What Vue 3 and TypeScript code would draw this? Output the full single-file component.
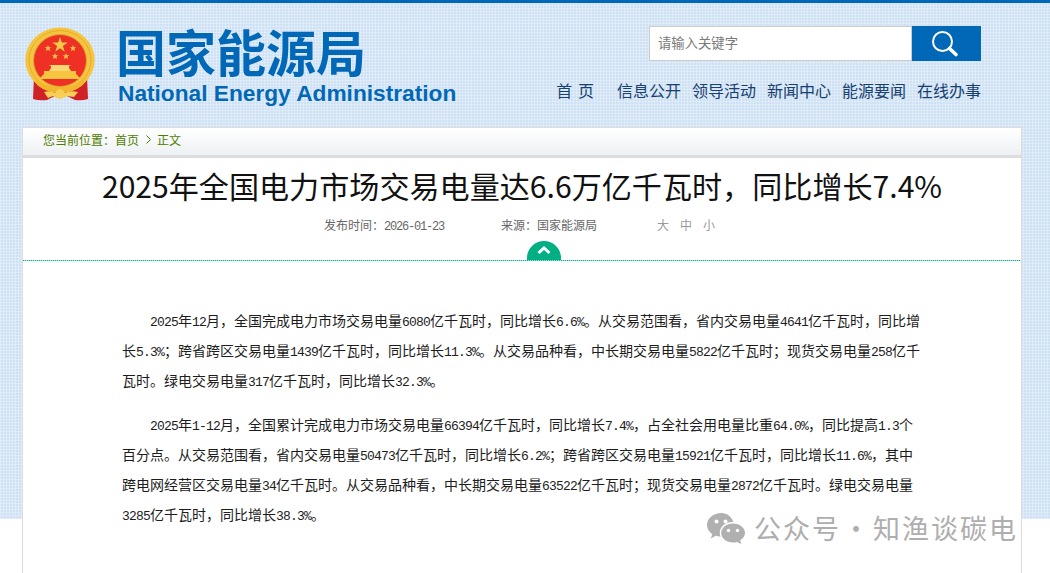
<script setup lang="ts">
type Run = { text: string; latin: boolean }

function toRuns(text: string): Run[] {
  return text
    .split(/([0-9.%\-]+)/)
    .filter((part) => part.length > 0)
    .map((part) => ({ text: part, latin: /^[0-9.%\-]+$/.test(part) }))
}

const navItems = ['信息公开', '领导活动', '新闻中心', '能源要闻', '在线办事']

const paragraphs: Run[][] = [
  '2025年12月，全国完成电力市场交易电量6080亿千瓦时，同比增长6.6%。从交易范围看，省内交易电量4641亿千瓦时，同比增长5.3%；跨省跨区交易电量1439亿千瓦时，同比增长11.3%。从交易品种看，中长期交易电量5822亿千瓦时；现货交易电量258亿千瓦时。绿电交易电量317亿千瓦时，同比增长32.3%。',
  '2025年1-12月，全国累计完成电力市场交易电量66394亿千瓦时，同比增长7.4%，占全社会用电量比重64.0%，同比提高1.3个百分点。从交易范围看，省内交易电量50473亿千瓦时，同比增长6.2%；跨省跨区交易电量15921亿千瓦时，同比增长11.6%，其中跨电网经营区交易电量34亿千瓦时。从交易品种看，中长期交易电量63522亿千瓦时；现货交易电量2872亿千瓦时。绿电交易电量3285亿千瓦时，同比增长38.3%。',
].map(toRuns)
</script>

<template>
  <div class="page">
    <header class="header">
      <div class="brand">
        <svg class="emblem" width="72" height="76" viewBox="0 0 72 76">
          <path d="M9 48 L8 72 Q14 74 22 73 L30 69 L42 69 L50 73 Q57 74 63 72 L62 48 Z" fill="#cf2226" />
          <ellipse cx="35" cy="33" rx="34.700" ry="32.500" fill="#f6c53f" />
          <ellipse cx="35" cy="33" rx="31" ry="29.500" fill="none" stroke="#e5ab2a" stroke-width="1" />
          <ellipse cx="35" cy="33.500" rx="26.500" ry="26" fill="#ee3124" stroke="#d7a735" stroke-width="1" />
          <path d="M35 10 l1.800 5.600 h5.900 l-4.800 3.500 1.800 5.700 -4.700 -3.500 -4.700 3.500 1.800 -5.700 -4.800 -3.500 h5.900 z" fill="#f7c948" />
          <path d="M23 18 l.8 2.300 h2.500 l-2 1.500 .8 2.400 -2.100 -1.500 -2.100 1.500 .8 -2.400 -2 -1.500 h2.500 z" fill="#f7c948" />
          <path d="M48 18 l.8 2.300 h2.500 l-2 1.500 .8 2.400 -2.100 -1.500 -2.100 1.500 .8 -2.400 -2 -1.500 h2.500 z" fill="#f7c948" />
          <path d="M30 26 l.8 2.300 h2.500 l-2 1.500 .8 2.400 -2.100 -1.500 -2.100 1.500 .8 -2.400 -2 -1.500 h2.500 z" fill="#f7c948" />
          <path d="M41 26 l.8 2.300 h2.500 l-2 1.500 .8 2.400 -2.100 -1.500 -2.100 1.500 .8 -2.400 -2 -1.500 h2.500 z" fill="#f7c948" />
          <path d="M24 44 l2 -3 v-2 l-2 -1 h22 l-2 1 v2 l2 3 z" fill="#f9d873" />
          <path d="M14 52 h42 l-5 -5 v-3 h-32 v3 z" fill="#f6c53f" />
          <path d="M10 52 Q20 60 35 60 Q50 60 60 52 L58 58 Q48 66 35 66 Q22 66 12 58 Z" fill="#f2b72f" />
          <path d="M19 65 Q26 63 30 66 Q35 58 40 66 Q44 63 53 65 L49 70 L42 69 Q35 75 28 69 L23 71 Z" fill="#f7cf57" />
        </svg>
        <div class="brand-text">
          <div class="brand-cn">国家能源局</div>
          <div class="brand-en">National Energy Administration</div>
        </div>
      </div>
      <div class="tools">
        <form class="search" @submit.prevent>
          <div class="search-input">请输入关键字</div>
          <button class="search-btn" type="button" aria-label="搜索">
            <svg width="28" height="28" viewBox="0 0 28 28">
              <circle cx="11.500" cy="11.500" r="9.500" fill="none" stroke="#fff" stroke-width="2" />
              <path d="M18.500 18.500 L25 24.500" stroke="#fff" stroke-width="3.600" stroke-linecap="round" />
            </svg>
          </button>
        </form>
        <nav class="nav">
          <a class="nav-home">首 页</a>
          <div class="nav-list">
            <a v-for="item in navItems" :key="item" class="nav-item">{{ item }}</a>
          </div>
        </nav>
      </div>
    </header>

    <main class="card">
      <div class="crumb">
        <span>您当前位置：</span><b>首页</b>
        <svg class="crumb-arrow" width="7" height="9" viewBox="0 0 7 9"><path d="M1.500 .5 L5.500 4.500 L1.500 8.500" fill="none" stroke="#4f7d00" /></svg>
        <b>正文</b>
      </div>
      <h1 class="title">2025年全国电力市场交易电量达6.6万亿千瓦时，同比增长7.4%</h1>
      <div class="meta">
        <div class="meta-date">发布时间：<span class="mono-date">2026-01-23</span></div>
        <div class="meta-source">来源：国家能源局</div>
        <div class="meta-size"><span>大</span><span>中</span><span>小</span></div>
      </div>
      <div class="divider">
        <span class="toggle">
          <svg width="14" height="9" viewBox="0 0 14 9"><path d="M1.500 7 L7 2 L12.500 7" fill="none" stroke="#fff" stroke-width="3" /></svg>
        </span>
      </div>
      <article class="body">
        <p v-for="(runs, i) in paragraphs" :key="i">
          <template v-for="(run, j) in runs" :key="j"><span v-if="run.latin" class="latin">{{ run.text }}</span><template v-else>{{ run.text }}</template></template>
        </p>
      </article>
    </main>

    <div class="watermark">
      <svg width="40" height="32" viewBox="0 0 40 32">
        <path d="M15.500 1 C7.500 1 1 6.300 1 13 C1 16.800 3 20 6.300 22.200 L4.800 26.500 L9.800 23.800 C11.400 24.300 12.700 24.600 14.500 24.700 C14 23.300 13.800 22.100 13.800 21 C13.800 14.500 20 9.800 27.300 10.100 C25.800 4.800 21 1 15.500 1 Z" fill="#b0b0b0" />
        <path d="M27 11.500 C20.500 11.500 15.200 15.700 15.200 21 C15.200 26.300 20.500 30.500 27 30.500 C28.500 30.500 29.800 30.300 31 29.900 L35.300 32 L34.200 28.200 C37.100 26.300 39 23.800 39 21 C39 15.700 33.500 11.500 27 11.500 Z" fill="#b0b0b0" />
        <circle cx="10.500" cy="9.500" r="2" fill="#fff" />
        <circle cx="19.500" cy="9.500" r="2" fill="#fff" />
        <circle cx="22.500" cy="18.500" r="1.700" fill="#fff" />
        <circle cx="31.500" cy="18.500" r="1.700" fill="#fff" />
      </svg>
      <span class="watermark-text">公众号<i>·</i>知渔谈碳电</span>
    </div>
  </div>
</template>

<style>
html,
body {
  margin: 0;
  background: #fff;
}
</style>

<style scoped>
.page {
  position: relative;
  height: 573px;
  overflow: hidden;
  box-sizing: border-box;
  border-top: 3px solid #0168b7;
  font-family: "Noto Sans CJK SC", "Liberation Sans", sans-serif;
  background-color: #fff;
  background-image:
    repeating-linear-gradient(0deg, rgba(255, 255, 255, 0.28) 0 1px, transparent 1px 3px),
    repeating-linear-gradient(90deg, rgba(255, 255, 255, 0.28) 0 1px, transparent 1px 3px),
    linear-gradient(#cfe2f5, #cfe2f5);
  background-size: 100% 516px;
  background-repeat: no-repeat;
}

.header {
  display: flex;
  justify-content: space-between;
  height: 124px;
  box-sizing: border-box;
  padding: 23px 69px 0 25px;
}

.brand {
  display: flex;
  gap: 21px;
}

.emblem {
  flex: none;
  margin-top: 1px;
  width: 72px;
}

.brand-text {
  display: flex;
  flex-direction: column;
  margin-top: -3px;
}

.brand-cn {
  margin-left: -2px;
  font-size: 50px;
  font-weight: 700;
  line-height: 54px;
  color: #0168b7;
  white-space: nowrap;
}

.brand-en {
  margin-top: 2px;
  font-family: "Liberation Sans", sans-serif;
  font-size: 22.700px;
  font-weight: 700;
  line-height: 28px;
  color: #0168b7;
  white-space: nowrap;
}

.tools {
  display: flex;
  flex-direction: column;
  align-items: flex-end;
}

.search {
  display: flex;
  margin: 0;
  height: 35px;
}

.search-input {
  box-sizing: border-box;
  width: 263px;
  height: 35px;
  padding-left: 8px;
  background: #fff;
  border: 1px solid #ccc;
  font-size: 13.330px;
  line-height: 31px;
  color: #7a7a7a;
}

.search-btn {
  display: flex;
  align-items: center;
  justify-content: center;
  width: 69px;
  height: 35px;
  padding: 0 3px 0 0;
  background: #0168b7;
  border: 0;
}

.nav {
  display: flex;
  align-items: center;
  gap: 23px;
  margin: 17px 0 0;
  color: #17406f;
  font-size: 16px;
  line-height: 24px;
}

.nav-home {
  font-size: 16px;
  word-spacing: 2px;
}

.nav-list {
  display: flex;
  gap: 11px;
}

.card {
  box-sizing: border-box;
  height: 470px;
  margin: 0 28px 0 22px;
  background: #fff;
  border: 1px solid #dcdcdc;
  border-bottom: 0;
}

.crumb {
  display: flex;
  align-items: center;
  box-sizing: border-box;
  height: 30px;
  padding: 0 0 4px 20px;
  background: linear-gradient(#fff, #eef1f4);
  border-bottom: 3px solid #dcdcdc;
  color: #4f7d00;
  font-size: 12px;
}

.crumb b {
  font-weight: 400;
}

.crumb-arrow {
  margin: 0 5px 0 6px;
}

.title {
  margin: 6px 0 0;
  font-size: 30.100px;
  font-weight: 400;
  line-height: 43px;
  text-align: center;
  color: #111;
  white-space: nowrap;
}

.meta {
  display: flex;
  margin-top: 8px;
  padding-left: 301px;
  font-size: 12px;
  line-height: 20px;
  color: #666;
}

.mono-date {
  font-family: "Liberation Mono", monospace;
  font-size: 12px;
  letter-spacing: -1.200px;
  line-height: 1;
}

.meta-date {
  width: 177px;
}

.meta-source {
  width: 156px;
}

.meta-size {
  display: flex;
  gap: 11px;
  color: #999;
}

.divider {
  display: flex;
  justify-content: center;
  height: 17px;
  margin-top: 9px;
  background: repeating-linear-gradient(90deg, #00b48c 0 1px, #a8e8da 1px 2px) left bottom / 100% 1px no-repeat;
}

.toggle {
  display: flex;
  justify-content: center;
  box-sizing: border-box;
  width: 34px;
  height: 19px;
  margin: -3px 0 0 44px;
  padding-top: 5px;
  background: #02ae84;
  border-radius: 17px 17px 0 0;
}

.body {
  box-sizing: border-box;
  padding: 44px 100px 0 99px;
  font-size: 14px;
  line-height: 30px;
  color: #1c1c1c;
}

.body p {
  margin: 0 0 14px;
  text-indent: 28px;
}

.latin {
  font-family: "Liberation Mono", monospace;
  font-size: 13px;
  letter-spacing: -0.800px;
  line-height: 1;
}

.watermark {
  position: absolute;
  left: 706px;
  top: 509px;
  display: flex;
  align-items: center;
  gap: 8px;
  color: #aeaeae;
  font-size: 27px;
  line-height: 32px;
  white-space: nowrap;
}

.watermark-text {
  letter-spacing: 2px;
}

.watermark-text i {
  margin: 0 1.500px;
  font-style: normal;
}
</style>
